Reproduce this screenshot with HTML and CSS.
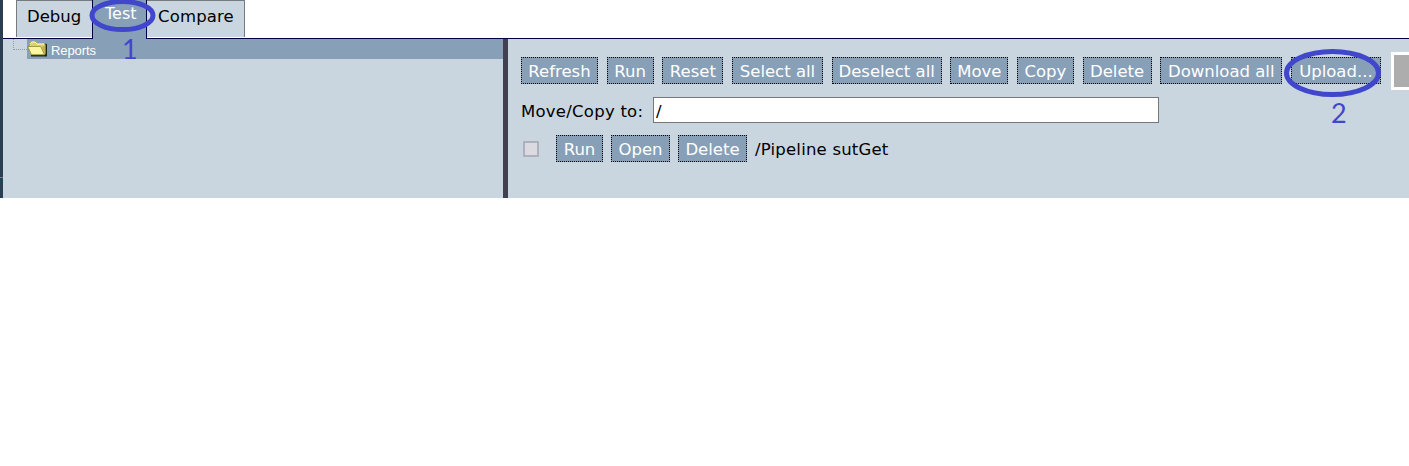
FILE: index.html
```html
<!DOCTYPE html>
<html lang="en">
<head>
<meta charset="utf-8">
<title>Test</title>
<link rel="stylesheet" href="styles.css">
</head>
<body>
<div class="app">
  <div class="edge"></div>
  <div class="main">
    <nav class="tabs">
      <a class="tab debug">Debug</a>
      <a class="tab active">Test</a>
      <a class="tab compare">Compare</a>
    </nav>
    <div class="panes">
      <aside class="tree">
        <div class="branch"></div>
        <div class="node">
          <svg class="folder" width="20" height="17" viewBox="0 0 20 17">
            <path d="M4 15.5h15.3V5l-1.3-1.2" fill="none" stroke="#20241c" stroke-width="1.8"/>
            <path d="M2.5 13V3.5l2-2h4l2 2h7.5v10.5H3.5z" fill="#d9d36b" stroke="#b5ad48"/>
            <path d="M3.5 3.5l1.5-1.5h3l2 2h7" fill="none" stroke="#fffbd0"/>
            <path d="M.7 6.5h13l3.8 8.2H4.5z" fill="#fbf6a2" stroke="#8f8b35" stroke-width=".8"/>
            <path d="M14.2 7l3.6 6.5V6z" fill="#c9ad54"/>
          </svg>
          <span>Reports</span>
        </div>
      </aside>
      <section class="content">
        <div class="toolbar">
          <button class="w77">Refresh</button><button class="w47">Run</button><button class="w61">Reset</button><button class="w91">Select all</button><button class="w110">Deselect all</button><button class="w58">Move</button><button class="w57">Copy</button><button class="w69">Delete</button><button class="w122">Download all</button><button class="w90">Upload...</button>
          <div class="progress"></div>
        </div>
        <div class="target"><label for="path">Move/Copy to:</label><input id="path" value="/"></div>
        <div class="report">
          <span class="check"></span>
          <button class="w47">Run</button><button class="w59">Open</button><button class="w69">Delete</button>
          <span class="name">/Pipeline sutGet</span>
        </div>
      </section>
    </div>
  </div>
</div>
<svg class="marks" width="1409" height="198" viewBox="0 0 1409 198">
  <ellipse cx="122.5" cy="15.5" rx="30.5" ry="14"/>
  <ellipse cx="1332.5" cy="73" rx="46" ry="21.5"/>
  <text x="122" y="59">1</text>
  <text x="1331" y="123">2</text>
</svg>
</body>
</html>
```
FILE: styles.css
```css
* { box-sizing: border-box; }
body {
  margin: 0;
  background: #fff;
  color: #000;
  font: 16.5px/20px "DejaVu Sans", Verdana, sans-serif;
  overflow: hidden;
}
.app { display: flex; width: 1409px; height: 198px; overflow: hidden; }
.edge {
  width: 3px;
  flex: none;
  background: linear-gradient(transparent 177px, #2f9a94 177px, #2f9a94 178px, transparent 178px), #2b3d50;
}
.main { flex: 1; min-width: 0; display: flex; flex-direction: column; }
.tabs {
  display: flex;
  height: 39px;
  padding-left: 13px;
  border-bottom: 1px solid #000040;
}
.tab {
  height: 37px;
  padding: 6px 0 0 10px;
  border: 1px solid #777b80;
  border-bottom: 0;
  background: #c9d5df;
  white-space: nowrap;
}
.debug { width: 76px; border-right: 0; }
.active {
  width: 55px;
  height: 39px;
  padding: 4px 0 0 12px;
  border: solid #000040;
  border-width: 0 1px;
  background: #879fb7;
  color: #fff;
  font-size: 16px;
}
.compare { width: 98px; border-left: 0; padding-left: 11px; letter-spacing: .15px; }
.panes { display: flex; flex: 1; background: #c9d5df; }
.tree { display: flex; width: 500px; flex: none; }
.branch {
  width: 14px;
  height: 11px;
  margin: 0 0 0 10px;
  border: dotted #929aa2;
  border-width: 0 0 1px 1px;
}
.node {
  display: flex;
  flex: 1;
  height: 20px;
  background: #879fb7;
  color: #fff;
  font: 13px/23px "Liberation Sans", Arial, sans-serif;
  letter-spacing: -.1px;
}
.folder { flex: none; margin: 1px 4px 0 0; }
.content { flex: 1; min-width: 0; border-left: 5px solid #404050; padding: 13px 0 0 13px; }
.toolbar { display: flex; height: 38px; width: 900px; }
button {
  flex: none;
  height: 27px;
  margin: 5px 8.67px 0 0;
  padding: 3px 0 0;
  border: 1px dotted #000;
  background: #879fb7;
  color: #fff;
  font: inherit;
  white-space: nowrap;
}
.w47 { width: 47px; }
.w57 { width: 57px; }
.w58 { width: 58px; }
.w59 { width: 59px; }
.w61 { width: 61px; }
.w69 { width: 69px; }
.w77 { width: 77px; }
.w90 { width: 90px; }
.w91 { width: 91px; }
.w110 { width: 110px; }
.w122 { width: 122px; }
.progress {
  width: 40px;
  height: 38px;
  margin-left: 1px;
  flex: none;
  border: 3px solid #fff;
  background: #adadad;
}
.target { display: flex; height: 26px; margin-top: 7px; align-items: center; }
.target label { width: 132px; padding-top: 3px; letter-spacing: .25px; }
.target input {
  width: 506px;
  height: 26px;
  padding: 3px 2px 1px;
  border: 1px solid #777;
  border-radius: 0;
  background: #fff;
  font: inherit;
}
.report { display: flex; height: 27px; margin-top: 12px; align-items: center; }
.report button { margin: 0 8px 0 0; }
.check {
  width: 16px;
  height: 16px;
  margin: 1px 17px 0 2px;
  border: 2px solid #adb0bd;
  background: #dcdae1;
}
.name { padding-top: 2px; letter-spacing: .2px; }
.marks { position: absolute; left: 0; top: 0; pointer-events: none; }
.marks ellipse { fill: none; stroke: #4147cc; stroke-width: 5; }
.marks text { fill: #4147cc; font: 27px Lato, sans-serif; }
```
